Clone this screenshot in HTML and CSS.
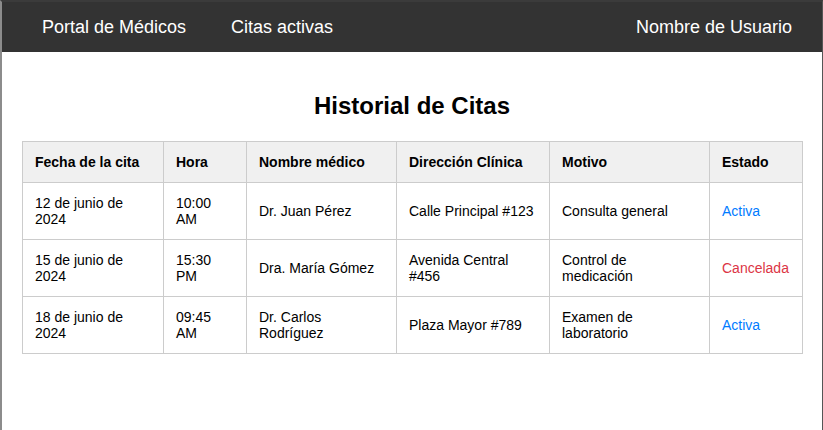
FILE: index.html
```html
<!DOCTYPE html>
<html lang="es">
<head>
<meta charset="utf-8">
<title>Historial de Citas</title>
<link rel="stylesheet" href="styles.css">
</head>
<body>
<div class="frame">
  <nav class="navbar">
    <div class="nav-left">
      <a class="nav-link" href="#">Portal de Médicos</a>
      <a class="nav-link" href="#">Citas activas</a>
    </div>
    <a class="nav-link" href="#">Nombre de Usuario</a>
  </nav>
  <main class="content">
    <h2 class="title">Historial de Citas</h2>
    <table class="citas">
      <colgroup>
        <col class="c1"><col class="c2"><col class="c3"><col class="c4"><col class="c5"><col class="c6">
      </colgroup>
      <thead>
        <tr>
          <th>Fecha de la cita</th>
          <th>Hora</th>
          <th>Nombre médico</th>
          <th>Dirección Clínica</th>
          <th>Motivo</th>
          <th>Estado</th>
        </tr>
      </thead>
      <tbody>
        <tr>
          <td>12 de junio de 2024</td>
          <td>10:00 AM</td>
          <td>Dr. Juan Pérez</td>
          <td>Calle Principal #123</td>
          <td>Consulta general</td>
          <td class="activa">Activa</td>
        </tr>
        <tr>
          <td>15 de junio de 2024</td>
          <td>15:30 PM</td>
          <td>Dra. María Gómez</td>
          <td>Avenida Central #456</td>
          <td>Control de medicación</td>
          <td class="cancelada">Cancelada</td>
        </tr>
        <tr>
          <td>18 de junio de 2024</td>
          <td>09:45 AM</td>
          <td>Dr. Carlos Rodríguez</td>
          <td>Plaza Mayor #789</td>
          <td>Examen de laboratorio</td>
          <td class="activa">Activa</td>
        </tr>
      </tbody>
    </table>
  </main>
</div>
</body>
</html>
```
FILE: styles.css
```css
html, body {
  margin: 0;
  padding: 0;
  height: 100%;
  background: #ffffff;
  font-family: "Liberation Sans", Arial, sans-serif;
}

.frame {
  box-sizing: border-box;
  height: 100%;
  border-left: 2px solid #8c8c8c;
  border-right: 1px solid #555555;
  border-top: 2px solid #3b3b3b;
  background: #ffffff;
}

.navbar {
  display: flex;
  justify-content: space-between;
  align-items: center;
  height: 50px;
  background: #333333;
  padding: 0 10px 0 20px;
}

.nav-left {
  display: flex;
  align-items: center;
  gap: 5px;
}

.nav-link {
  color: #ffffff;
  text-decoration: none;
  font-size: 18px;
  padding: 0 20px;
}

.content {
  padding: 20px;
}

.title {
  text-align: center;
  font-size: 24px;
  font-weight: bold;
  margin: 20px 0 21px;
  color: #000000;
}

.citas {
  width: 100%;
  border-collapse: collapse;
  table-layout: fixed;
  font-size: 14px;
  color: #000000;
}

.c1 { width: 141px; }
.c2 { width: 83px; }
.c3 { width: 150px; }
.c4 { width: 153px; }
.c5 { width: 160px; }
.c6 { width: 93px; }

.citas th,
.citas td {
  border: 1px solid #cccccc;
  padding: 12px;
  text-align: left;
  vertical-align: middle;
  line-height: 16px;
}

.citas th {
  background: #f0f0f0;
  font-weight: bold;
}

.activa {
  color: #007bff;
}

.cancelada {
  color: #dc3545;
}
```
